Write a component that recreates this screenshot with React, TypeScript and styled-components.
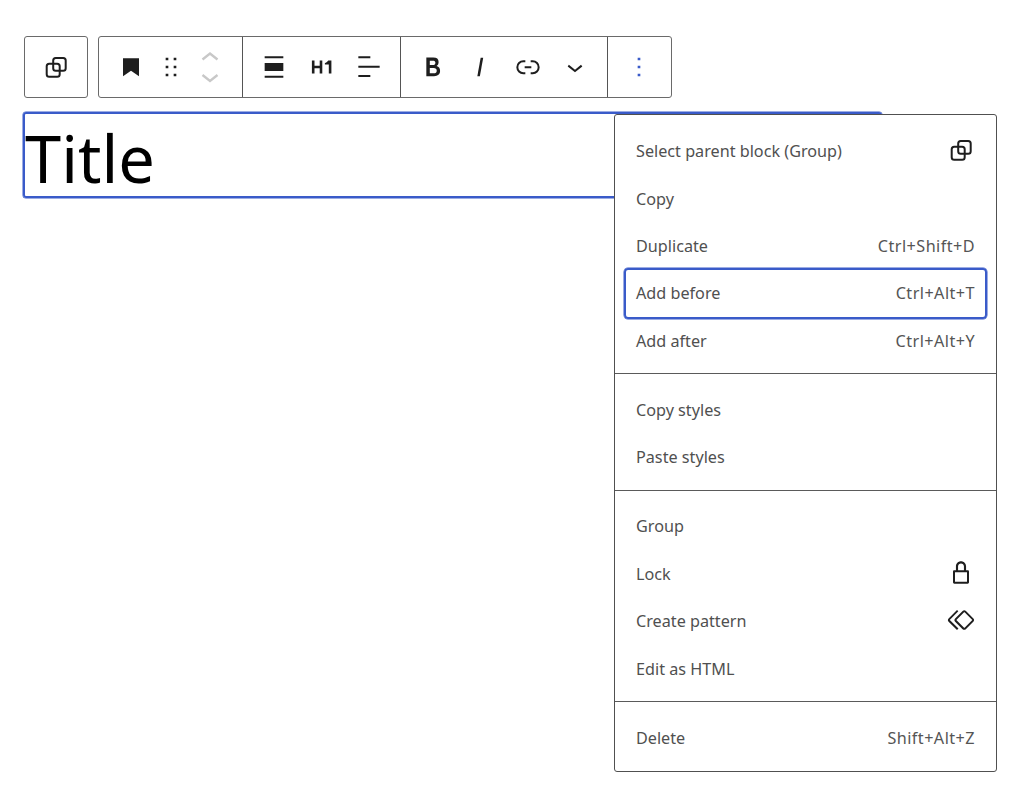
import React from "react";
import styled, { createGlobalStyle } from "styled-components";

const Global = createGlobalStyle`
  html, body { margin: 0; background: #fff; }
  body { font-family: "Noto Sans", "Open Sans", sans-serif; }
`;

const Page = styled.div`
  position: relative;
  width: 1024px;
  height: 790px;
  overflow: hidden;
  box-sizing: border-box;
  padding: 36px 0 0 24px;
`;

const ToolbarRow = styled.div`
  display: flex;
  gap: 10px;
  height: 62px;
`;

const ToolbarBox = styled.div`
  display: flex;
  box-sizing: border-box;
  height: 62px;
  border: 1px solid #6a6a6a;
  border-radius: 3px;
`;

const Section = styled.div<{ $pad: number; $width: number }>`
  display: flex;
  align-items: center;
  box-sizing: border-box;
  width: ${(p) => p.$width}px;
  padding: 0 ${(p) => p.$pad}px;
  & + & { border-left: 1px solid #555; }
`;

const ToolButton = styled.div<{ $w?: number; $color?: string }>`
  display: flex;
  align-items: center;
  justify-content: center;
  flex: none;
  width: ${(p) => p.$w ?? 47.5}px;
  height: 60px;
  color: ${(p) => p.$color ?? "#1e1e1e"};
  svg { display: block; }
`;

const TitleBlock = styled.div`
  box-sizing: border-box;
  width: 859px;
  height: 86px;
  margin: 14px 0 0 -1px;
  border: 2px solid #3a5bc9;
  border-radius: 3px;
  box-shadow: 0 0 0 0.5px #3a5bc9;
`;

const TitleText = styled.h1`
  margin: 0;
  font-weight: 400;
  font-size: 65px;
  line-height: 88px;
  color: #000;
`;

const Menu = styled.div`
  position: absolute;
  top: 114px;
  left: 614px;
  width: 383px;
  height: 658px;
  box-sizing: border-box;
  display: flex;
  flex-direction: column;
  background: #fff;
  border: 1px solid #505050;
  border-radius: 3px;
`;

const MenuGroup = styled.div<{ $top: number; $bottom: number }>`
  display: flex;
  flex-direction: column;
  padding: ${(p) => p.$top}px 9px ${(p) => p.$bottom}px;
  & + & { border-top: 1px solid #5a5a5a; }
`;

const MenuRow = styled.div<{ $focused?: boolean }>`
  position: relative;
  display: flex;
  align-items: center;
  justify-content: space-between;
  box-sizing: border-box;
  height: 47.4px;
  padding: 0 12px;
  font-size: 16.2px;
  color: #505050;
  ${(p) =>
    p.$focused
      ? `&::after {
          content: "";
          position: absolute;
          inset: -2px 0;
          border: 2px solid #3a5bc9;
          border-radius: 4px;
          box-shadow: 0 0 0 0.5px #3a5bc9;
        }`
      : ""}
`;

const Shortcut = styled.span`
  color: #555;
  letter-spacing: 0.45px;
`;

const MenuIcon = styled.span`
  display: flex;
  color: #1e1e1e;
  margin: 0 -2px 2px 0;
  svg { display: block; }
`;

const Icon = ({ d, size = 32, view = 24 }: { d: string; size?: number; view?: number }) => (
  <svg width={size} height={size} viewBox={`0 0 ${view} ${view}`} fill="currentColor">
    <path d={d} />
  </svg>
);

const Parent = () => (
  <svg width="32" height="32" viewBox="0 0 32 32" fill="none" stroke="currentColor" strokeWidth="2">
    <rect x="6.7" y="12.7" width="13" height="13" rx="2.5" />
    <rect x="13.2" y="7" width="12.5" height="12.7" rx="2.5" />
  </svg>
);

const Mover = () => (
  <svg width="32" height="52" viewBox="0 0 32 52" fill="none" stroke="#c8c8c8" strokeWidth="2.4">
    <path d="M8.5 18.5 16 12.5 23.5 18.5" />
    <path d="M8.5 34 16 40 23.5 34" />
  </svg>
);

const P = {
  bookmark: "M6 5.5h12V19l-6-4.2L6 19z",
  drag: "M8 7h2V5H8v2zm0 6h2v-2H8v2zm0 6h2v-2H8v2zm6-14v2h2V5h-2zm0 8h2v-2h-2v2zm0 6h2v-2h-2v2z",
  alignNone: "M19 5.5H5V4h14v1.5ZM19 20H5v-1.5h14V20ZM5 9h14v6H5V9Z",
  h1: "M9 5h2v10H9v-4H5v4H3V5h2v4h4V5zm6.6 0c-.6.9-1.5 1.7-2.6 2v1h3v7h2V5h-2.4z",
  alignLeft: "M13 5.5H4V4h9v1.5Zm7 7H4V11h16v1.5Zm-7 7H4V18h9v1.5Z",
  bold: "M14.7 11.3c1-.6 1.5-1.6 1.5-3 0-2.3-1.3-3.4-4-3.4H7v14h5.8c1.4 0 2.5-.3 3.3-1 .8-.7 1.2-1.7 1.2-2.9.1-1.9-.8-3.1-2.6-3.7zm-5.1-4h2.3c.6 0 1.1.1 1.4.4.3.3.5.7.5 1.2s-.2 1-.5 1.2c-.3.3-.8.4-1.4.4H9.6V7.3zm4.6 9c-.4.3-1 .4-1.7.4H9.6v-3.9h2.9c.7 0 1.3.2 1.7.5.4.3.6.8.6 1.5s-.2 1.2-.6 1.5z",
  italic: "M12.5 5L10 19h1.9l2.5-14z",
  link: "M10 17.389H8.444A5.194 5.194 0 1 1 8.444 7H10v1.5H8.444a3.694 3.694 0 0 0 0 7.389H10v1.5ZM14 7h1.556a5.194 5.194 0 0 1 0 10.39H14v-1.5h1.556a3.694 3.694 0 0 0 0-7.39H14V7Zm-4.5 6h5v-1.5h-5V13Z",
  chevron: "M17.5 11.6L12 16l-5.5-4.4.9-1.2L12 14l4.5-3.6 1 1.2z",
  more: "M13 19h-2v-2h2v2zm0-6h-2v-2h2v2zm0-6h-2V5h2v2z",
  lock: "M17 10h-1.2V7c0-2.1-1.7-3.8-3.8-3.8-2.1 0-3.8 1.7-3.8 3.8v3H7c-.6 0-1 .4-1 1v8c0 .6.4 1 1 1h10c.6 0 1-.4 1-1v-8c0-.6-.4-1-1-1zM9.8 7c0-1.2 1-2.2 2.2-2.2 1.2 0 2.2 1 2.2 2.2v3H9.8V7zm6.7 11.5h-9v-7h9v7z",
  symbol: "M21.3 10.8l-5.6-5.6c-.7-.7-1.8-.7-2.5 0l-5.6 5.6c-.7.7-.7 1.8 0 2.5l5.6 5.6c.3.3.8.5 1.2.5s.9-.2 1.2-.5l5.6-5.6c.8-.7.8-1.9.1-2.5zm-1 1.4l-5.6 5.6c-.1.1-.3.1-.4 0l-5.6-5.6c-.1-.1-.1-.3 0-.4l5.6-5.6s.1-.1.2-.1.1 0 .2.1l5.6 5.6c.1.1.1.3 0 .4zm-16.6-.4L10 5.5l-1-1-6.3 6.3c-.7.7-.7 1.8 0 2.5L9 19.5l1.1-1.1-6.3-6.3c-.2 0-.2-.2-.1-.3z",
};

export default function App() {
  return (
    <Page>
      <Global />
      <ToolbarRow>
        <ToolbarBox>
          <Section $pad={0} $width={62}>
            <ToolButton $w={62}><Parent /></ToolButton>
          </Section>
        </ToolbarBox>
        <ToolbarBox>
          <Section $pad={8} $width={143}>
            <ToolButton><Icon d={P.bookmark} /></ToolButton>
            <ToolButton $w={32}><Icon d={P.drag} /></ToolButton>
            <ToolButton $w={46}><Mover /></ToolButton>
          </Section>
          <Section $pad={7} $width={158}>
            <ToolButton><Icon d={P.alignNone} /></ToolButton>
            <ToolButton><Icon d={P.h1} view={20} size={26} /></ToolButton>
            <ToolButton><Icon d={P.alignLeft} /></ToolButton>
          </Section>
          <Section $pad={8} $width={207}>
            <ToolButton><Icon d={P.bold} /></ToolButton>
            <ToolButton><Icon d={P.italic} /></ToolButton>
            <ToolButton><Icon d={P.link} /></ToolButton>
            <ToolButton><Icon d={P.chevron} /></ToolButton>
          </Section>
          <Section $pad={7} $width={64}>
            <ToolButton $color="#3a5bc9"><Icon d={P.more} /></ToolButton>
          </Section>
        </ToolbarBox>
      </ToolbarRow>

      <TitleBlock>
        <TitleText>Title</TitleText>
      </TitleBlock>

      <Menu>
        <MenuGroup $top={12.5} $bottom={8.5}>
          <MenuRow>Select parent block (Group)<MenuIcon><Parent /></MenuIcon></MenuRow>
          <MenuRow>Copy</MenuRow>
          <MenuRow>Duplicate<Shortcut>Ctrl+Shift+D</Shortcut></MenuRow>
          <MenuRow $focused>Add before<Shortcut>Ctrl+Alt+T</Shortcut></MenuRow>
          <MenuRow>Add after<Shortcut>Ctrl+Alt+Y</Shortcut></MenuRow>
        </MenuGroup>
        <MenuGroup $top={12} $bottom={9}>
          <MenuRow>Copy styles</MenuRow>
          <MenuRow>Paste styles</MenuRow>
        </MenuGroup>
        <MenuGroup $top={12} $bottom={9}>
          <MenuRow>Group</MenuRow>
          <MenuRow>Lock<MenuIcon><Icon d={P.lock} /></MenuIcon></MenuRow>
          <MenuRow>Create pattern<MenuIcon><Icon d={P.symbol} /></MenuIcon></MenuRow>
          <MenuRow>Edit as HTML</MenuRow>
        </MenuGroup>
        <MenuGroup $top={12} $bottom={9}>
          <MenuRow>Delete<Shortcut>Shift+Alt+Z</Shortcut></MenuRow>
        </MenuGroup>
      </Menu>
    </Page>
  );
}
